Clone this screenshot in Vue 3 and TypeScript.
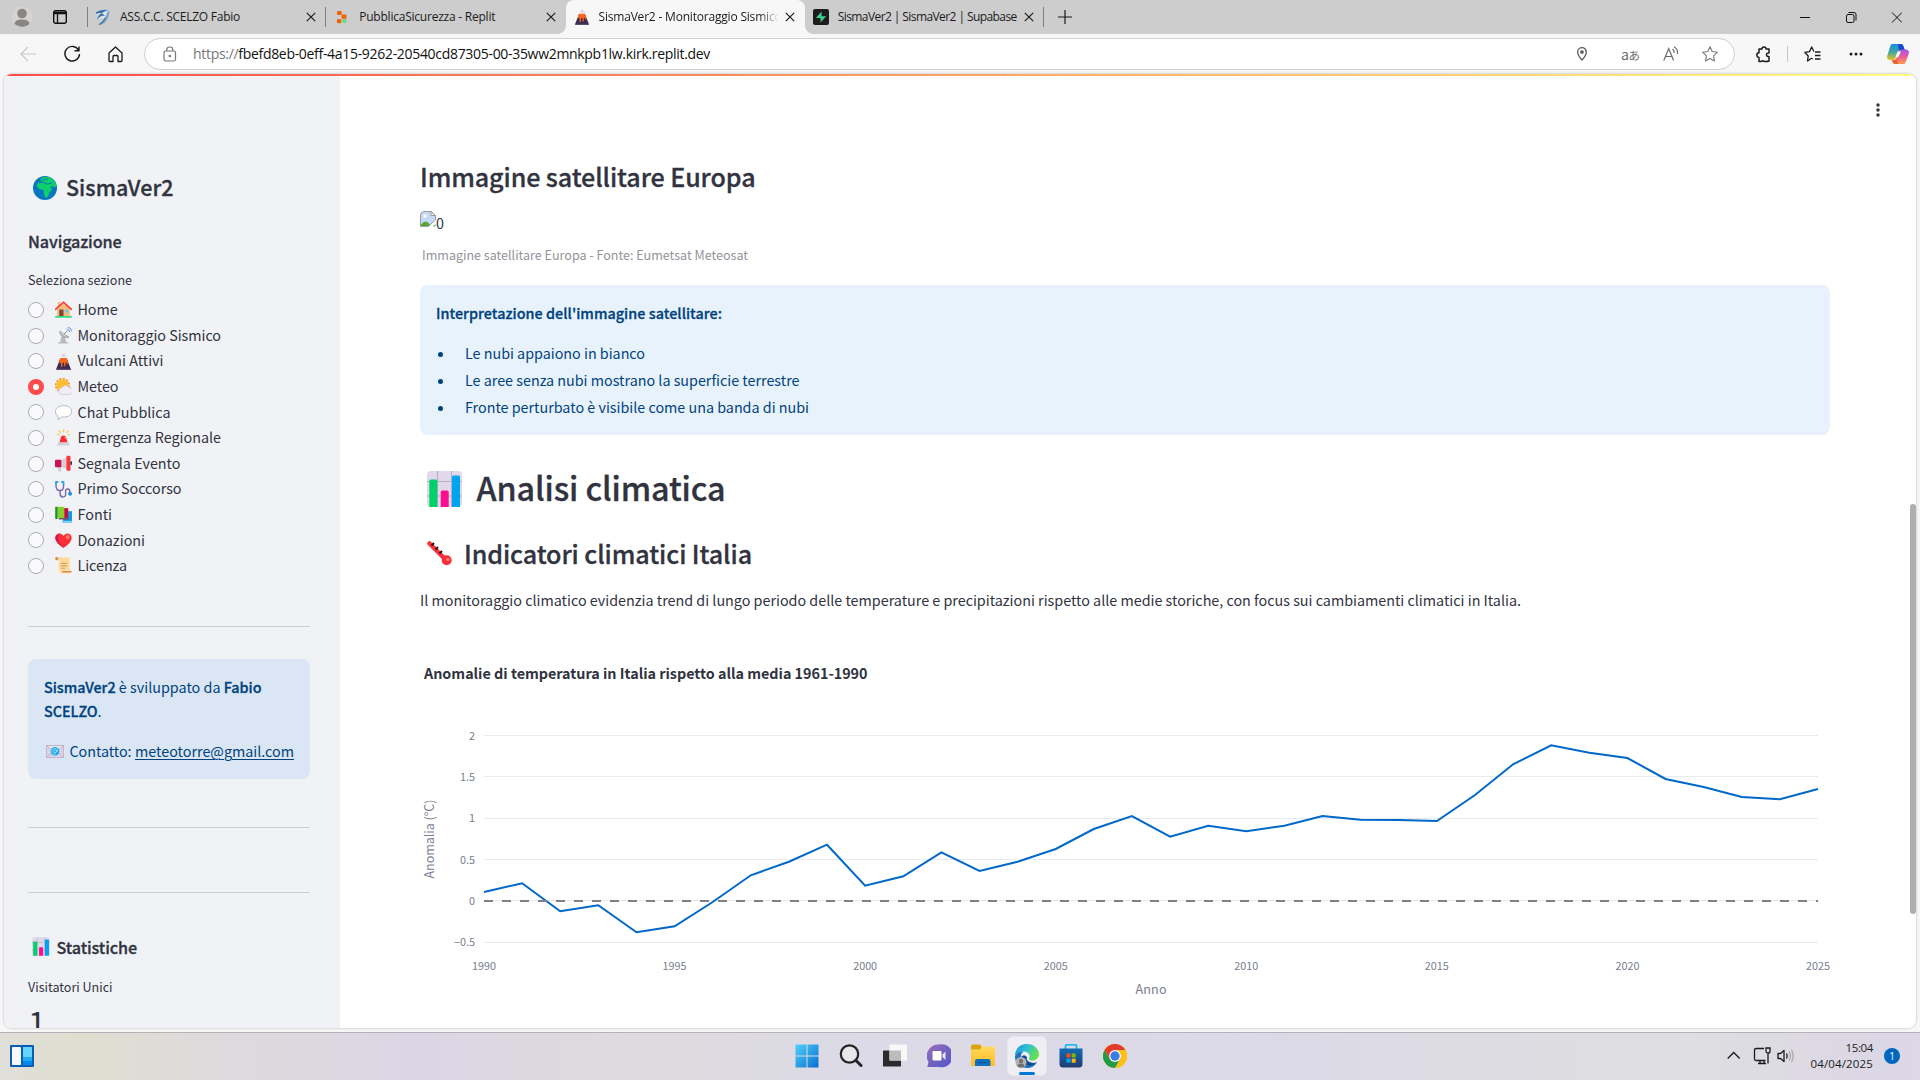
<script setup lang="ts">
interface Tab { title: string; icon: string; width: number; active?: boolean }

const tabs: Tab[] = [
  { title: 'ASS.C.C. SCELZO Fabio', icon: 'f-bird', width: 120 },
  { title: 'PubblicaSicurezza - Replit', icon: 'f-replit', width: 136 },
  { title: 'SismaVer2 - Monitoraggio Sismico', icon: 'e-volcano', width: 183, active: true },
  { title: 'SismaVer2 | SismaVer2 | Supabase', icon: 'f-supabase', width: 179 },
]

const sections = [
  { label: 'Home', icon: 'e-home', width: 40 },
  { label: 'Monitoraggio Sismico', icon: 'e-dish', width: 143.5 },
  { label: 'Vulcani Attivi', icon: 'e-volcano', width: 86 },
  { label: 'Meteo', icon: 'e-sun', width: 41 },
  { label: 'Chat Pubblica', icon: 'e-chat', width: 93 },
  { label: 'Emergenza Regionale', icon: 'e-siren', width: 143.5 },
  { label: 'Segnala Evento', icon: 'e-mega', width: 103 },
  { label: 'Primo Soccorso', icon: 'e-steth', width: 104 },
  { label: 'Fonti', icon: 'e-books', width: 34.5 },
  { label: 'Donazioni', icon: 'e-heart', width: 67.5 },
  { label: 'Licenza', icon: 'e-scroll', width: 49.5 },
]
const selected = 'Meteo'

const notes = [
  { text: 'Le nubi appaiono in bianco', width: 180 },
  { text: 'Le aree senza nubi mostrano la superficie terrestre', width: 334.5 },
  { text: 'Fronte perturbato è visibile come una banda di nubi', width: 344 },
]

const taskApps = ['t-win', 't-search', 't-view', 't-chat', 't-folder', 't-edge', 't-store', 't-chrome']

// Temperature anomalies, one value per year from 1990
const anomalies = [
  0.108, 0.213, -0.126, -0.053, -0.38, -0.307, -0.013, 0.309, 0.474, 0.679, 0.184, 0.297,
  0.587, 0.361, 0.474, 0.627, 0.869, 1.026, 0.776, 0.909, 0.841, 0.909, 1.026, 0.981, 0.978,
  0.966, 1.28, 1.651, 1.88, 1.791, 1.727, 1.473, 1.376, 1.256, 1.228, 1.352,
]
const xOf = (year: number) => 64 + ((year - 1990) * 1334) / 35
const yOf = (v: number) => 260.9 - v * 82.75
const points = anomalies.map((v, i) => `${xOf(1990 + i).toFixed(1)},${yOf(v).toFixed(1)}`).join(' ')
const yTicks = [2, 1.5, 1, 0.5, 0, -0.5]
const xTicks = [1990, 1995, 2000, 2005, 2010, 2015, 2020, 2025]

// Tracks a label so that it fills its design width whichever face is installed
const vFit = {
  mounted(el: HTMLElement, binding: { value: number }) {
    const count = (el.textContent ?? '').trim().length
    const natural = el.getBoundingClientRect().width
    if (count) el.style.letterSpacing = `${((binding.value - natural) / count).toFixed(3)}px`
  },
}
</script>

<template>
  <div class="screen">
    <svg class="sprite" width="0" height="0" aria-hidden="true">
      <defs>
        <linearGradient id="gWin" x1="0" y1="0" x2="1" y2="1"><stop offset="0" stop-color="#4fd0fb" /><stop offset="1" stop-color="#0a6fd0" /></linearGradient>
        <linearGradient id="gEdge" x1="0" y1="0" x2="1" y2="0.4"><stop offset="0" stop-color="#1b8fd8" /><stop offset="0.5" stop-color="#2cc0d8" /><stop offset="1" stop-color="#66e04c" /></linearGradient>
        <linearGradient id="gChat" x1="0" y1="0" x2="1" y2="1"><stop offset="0" stop-color="#9a6fb5" /><stop offset="1" stop-color="#4f55cc" /></linearGradient>
        <linearGradient id="gFold" x1="0" y1="0" x2="0" y2="1"><stop offset="0" stop-color="#ffd95e" /><stop offset="1" stop-color="#fbbd23" /></linearGradient>
        <linearGradient id="gStore" x1="0" y1="0" x2="0" y2="1"><stop offset="0" stop-color="#0f6cb5" /><stop offset="1" stop-color="#233a72" /></linearGradient>
        <linearGradient id="gCopA" x1="0" y1="0" x2="0" y2="1"><stop offset="0" stop-color="#1a8bea" /><stop offset="0.5" stop-color="#3ba7a0" /><stop offset="1" stop-color="#f0c21a" /></linearGradient>
        <linearGradient id="gCopB" x1="0" y1="0" x2="0" y2="1"><stop offset="0" stop-color="#a052ee" /><stop offset="0.5" stop-color="#ee5b9a" /><stop offset="1" stop-color="#ff9a4a" /></linearGradient>
      </defs>

      <symbol id="f-bird" viewBox="0 0 16 16"><path d="M1 3.500Q6 0 14 1l1-.3Q15 6 13 10q-2 4-6 5.500l-4 .2q5-3 5.500-7Q4 8.500 2 12q0-5 6-7Q4 4 1 6z" fill="#dfe8f0" /><path d="M1 3.200Q6 0 14.500 1 9 2 7 4.500q2 .5 3 2.500Q5 6 2 11.500 2.500 6 7 4 4 3.500 1 5z" fill="#3876ac" /><path d="M12 3l2.700-1.500q0 5-2.200 9Q10 14.500 6 15.700l-3 0q5-2 7-6.500 1.500-3 2-6.200z" fill="#8ba3b8" /><path d="M10.500 7q.5 5-5 8.500l-2.500.2Q8.500 12 10.500 7z" fill="#3b78b0" /></symbol>
      <symbol id="f-replit" viewBox="0 0 16 16"><rect x="3" y="2" width="4.700" height="4" rx="1" fill="#f26207" /><rect x="7.500" y="5.500" width="5" height="4.300" rx="1" fill="#f26207" /><rect x="3" y="10" width="4.300" height="4.300" rx="1" fill="#f26207" /><rect x="8" y="10" width="4.500" height="4" rx="1" fill="#77d68a" /></symbol>
      <symbol id="f-supabase" viewBox="0 0 16 16"><rect width="16" height="16" rx="2" fill="#1c1c1c" /><path d="M8.600 2.500v4.700h4.600L7.600 13.500V9H2.900z" fill="#3ecf8e" /></symbol>

      <symbol id="e-globe" viewBox="0 0 24 24"><circle cx="12" cy="12" r="12" fill="#0877bf" /><path d="M7 3.500C9 1 14-.5 18 2c3 2 5 5 5.500 8l-2 1.500-2-1.500-2.500 1 2 2.500-3 3.500-1 3.500-2.500 1.500L11 18l-.5-4-4-1L3.500 10 5 6.500l4-1z" fill="#0bd168" /><path d="M6 7q4-2 8 1l5-1M9 4l6-1" fill="none" stroke="#0877bf" stroke-width="1.100" /></symbol>
      <symbol id="e-home" viewBox="0 0 16 16"><rect x="2.500" y="1" width="2.500" height="5" fill="#f4bd7b" /><path d="M2 7l6-5.500L14 7v8H2z" fill="#f4bd7b" /><path d="M.5 7.800L8 1.200l7.500 6.600" fill="none" stroke="#fb3838" stroke-width="1.500" stroke-linecap="round" /><rect x="4" y="8" width="4" height="6.500" fill="#7b4837" /><rect x="9.500" y="8" width="3" height="3" fill="#6fc5f8" /><rect y="14.200" width="16" height="1.600" rx=".8" fill="#35dc88" /></symbol>
      <symbol id="e-dish" viewBox="0 0 16 16"><path d="M6 9h3l1.500 5H12v1.500H3V14h2z" fill="#b9b9bc" /><path d="M4 4.500Q4 10 12.500 10.500L13 9z" fill="#a9a9ad" /><path d="M4.500 3.800L13 9.500q-3.500.3-6-1.500T4.500 3.800" fill="#d2d2d5" stroke="#97979c" stroke-width=".5" /><path d="M8.500 6.500l3.500-3" stroke="#8a8a8f" stroke-width=".9" /><path d="M11 1.800q2.500.2 2.800 2.900M12 .3q3.600.2 3.500 3.800" fill="none" stroke="#5c93ea" stroke-width=".9" /></symbol>
      <symbol id="e-volcano" viewBox="0 0 16 16"><circle cx="8" cy="2.300" r="1.700" fill="#d8d5db" /><circle cx="10" cy="3" r="1.300" fill="#e6e3e8" /><path d="M5 5h6l4 10.500H1z" fill="#392c50" /><path d="M5 4.800h6l1.600 5-1.600 1v-2l-1.200.3v3.400H8.500V9.500L7 9v4H5.600V9.300L3.700 9z" fill="#fb651f" /><path d="M1 15.800q0-1.500 2-1.500h10q2 0 2 1.500z" fill="#493262" /></symbol>
      <symbol id="e-sun" viewBox="0 0 16 16"><circle cx="7" cy="7" r="6.300" fill="none" stroke="#ff8a1e" stroke-width="1.600" stroke-dasharray="2 1.300" /><circle cx="7" cy="7" r="5.700" fill="#fcc02f" /><path d="M6.500 15.500a3 3 0 01-.3-6A4 4 0 0113 8.700a3.400 3.400 0 01.5 6.800z" fill="#f1edf7" stroke="#cec3dc" stroke-width=".7" /></symbol>
      <symbol id="e-chat" viewBox="0 0 16 16"><path d="M8 1.500c5 0 7.600 2.500 7.600 5.500S13 12.300 8 12.300H6L3 14.800l-.3-3.600C1 10.300.4 8.800.4 7 .4 4 3.500 1.500 8 1.500z" fill="#fff" stroke="#b4b5ba" stroke-width=".9" /></symbol>
      <symbol id="e-siren" viewBox="0 0 16 16"><path d="M8 .5v2.500M3.500 1.500l1.700 2M12.500 1.500l-1.700 2M2 5l2 .6M14 5l-2 .6" stroke="#ffc843" stroke-width="1.200" /><path d="M4.200 13l1.300-5q.4-2 2.500-2t2.500 2l1.300 5z" fill="#fa2d35" /><path d="M8.500 7.500h1.500l.4 2z" fill="#ffb7a8" /><path d="M3.200 12.500h9.600l1.200 3H2z" fill="#d3cfd3" /></symbol>
      <symbol id="e-mega" viewBox="0 0 16 16"><path d="M2 8h4v7.500H3z" fill="#d5d2d6" /><path d="M5.500 5L12 1.500v12L5.500 11z" fill="#d5d2d6" /><rect y="4.500" width="6" height="7" rx=".8" fill="#ce1250" /><rect x="10.800" y=".8" width="3.800" height="14" rx="1.200" fill="#fc3539" /><rect x="14.500" y="5.800" width="1.500" height="3.500" rx=".7" fill="#30293d" /></symbol>
      <symbol id="e-steth" viewBox="0 0 16 16"><path d="M3 1H1v4q0 4 3.600 4T8 5V1H6" fill="none" stroke="#8063b5" stroke-width="1.300" /><path d="M3 1H1v3M6 1h2v3" fill="none" stroke="#18b1e8" stroke-width="1.400" /><path d="M4.800 9v3q0 3 2.700 3t2.500-3V9q.2-1.500 2-1.500t2 2V11" fill="none" stroke="#7565aa" stroke-width="1.300" /><circle cx="14.200" cy="12" r="1.800" fill="#168bf2" /></symbol>
      <symbol id="e-books" viewBox="0 0 16 16"><path d="M9 5h7v10.500H7z" fill="#0a9de3" /><path d="M7 14h9v1.500H7z" fill="#8dcaf0" /><path d="M4 2h8.500v10.500H4z" fill="#ca0b4a" /><path d="M3.500 11h9v1.500h-9z" fill="#6e5267" /><path d="M.3.800h8.500v10.500H.300z" fill="#84cf2c" /><path d="M.3.800h2v11.500h-2z" fill="#218c43" /></symbol>
      <symbol id="e-heart" viewBox="0 0 16 16"><path d="M8 15Q.3 10 .3 5.700C.3 1 5.500-.2 8 3.700c2.500-3.900 7.700-2.700 7.700 2Q15.700 10 8 15z" fill="#f92f35" /><path d="M.3 5.700Q.3 10 8 15 3 10 3 5t2-3.600Q.5 2 .3 5.700" fill="#d61649" /><ellipse cx="12" cy="4.600" rx="1.800" ry="2.200" fill="#ff716a" transform="rotate(25 12 4.600)" /></symbol>
      <symbol id="e-scroll" viewBox="0 0 16 16"><path d="M1 .2h11.500q1.500 0 1.500 1.500V13H3.500V3H1z" fill="#fddb9f" /><circle cx="1.600" cy="1.500" r="1.500" fill="#cf8d4d" /><path d="M5.500 6h6M5.500 8.300h6M5.500 10.600h4" stroke="#dda25e" stroke-width="1.100" /><path d="M6 13h9.800q0 2.500-2 2.500H5q-1.500 0-1.500-1.800z" fill="#ffe2ae" /><path d="M6.500 13.900h9" stroke="#cf8d4d" stroke-width="1.400" /></symbol>
      <symbol id="e-mail" viewBox="0 0 18 13"><rect x=".5" y=".5" width="17" height="12" fill="#ddd3e4" stroke="#c3b7cd" /><path d="M.5 12.500L7 6.500M17.500 12.500L11 6.500" stroke="#b7aac3" stroke-width=".8" fill="none" /><path d="M.5.500h17L9 8z" fill="#ece6f0" stroke="#b7aac3" stroke-width=".8" /><circle cx="9" cy="6.300" r="4.300" fill="#16a5ec" /><circle cx="9" cy="6.300" r="1.400" fill="none" stroke="#9fe2ff" stroke-width=".8" /><path d="M10.500 5v1.800q.9 1 1.200-.8a2.900 2.900 0 10-1.700 2.900" fill="none" stroke="#9fe2ff" stroke-width=".7" /></symbol>
      <symbol id="e-bars" viewBox="0 0 35 36"><rect width="35" height="36" rx="4" fill="#e1d8ec" /><path d="M10.500 0v36M24.500 0v36M0 10.500h35M0 25h35" stroke="#b9adc3" stroke-width="1.100" /><path d="M2.300 36V10q0-1.500 1.500-1.500h5q1.500 0 1.500 1.500v26z" fill="#00d169" /><path d="M13.700 36V21q0-1.500 1.500-1.500h5q1.500 0 1.500 1.500v15z" fill="#fb0e8f" /><path d="M25 36V6q0-1.500 1.500-1.500h5Q33 4.500 33 6v30z" fill="#00a5ef" /></symbol>
      <symbol id="e-thermo" viewBox="0 0 25 25"><path d="M2.500 2.500L19 19" stroke="#fb3038" stroke-width="4.500" stroke-linecap="round" /><circle cx="19.700" cy="19.300" r="5" fill="#fb3038" /><path d="M4.500 4.500l2.500-2.500M8.500 8.500L11 6M12.500 12.500L15 10" stroke="#1d1720" stroke-width="2" /><circle cx="21" cy="18.500" r="1.600" fill="#ff8a80" /></symbol>

      <symbol id="t-win" viewBox="0 0 24 24"><path d="M.5.500h11v11H.500zM12.500.500h11v11h-11zM.5 12.500h11v11H.500zM12.500 12.500h11v11h-11z" fill="url(#gWin)" /></symbol>
      <symbol id="t-search" viewBox="0 0 24 24"><circle cx="10.500" cy="10" r="8.700" fill="#e9e7ee" stroke="#242424" stroke-width="2.200" /><path d="M17 16.500l5 5" stroke="#242424" stroke-width="3" stroke-linecap="round" /></symbol>
      <symbol id="t-view" viewBox="0 0 24 24"><rect y="6.500" width="18" height="16" rx=".7" fill="#2b2b2b" /><rect x="6.500" y=".5" width="17.500" height="16" rx=".7" fill="#f8f8f8" /><path d="M6.500 6.500H18v10H6.500z" fill="#bcbcbd" /></symbol>
      <symbol id="t-chat" viewBox="0 0 24 24"><path d="M12 .5a11.500 11.500 0 110 22.500H1q-.7 0-.5-1l1-4A11.500 11.500 0 0112 .5z" fill="url(#gChat)" /><rect x="5.500" y="7" width="9" height="9.500" rx="1" fill="#fff" /><path d="M15.500 10.500l3-3v8.500l-3-3z" fill="#e9e5ff" /></symbol>
      <symbol id="t-folder" viewBox="0 0 24 24"><path d="M0 2q0-1.500 1.500-1.500H8q1 0 1.700 1L11 3v5H0z" fill="#dda20c" /><path d="M0 5.500h9l2-3h11.500Q24 2.500 24 4v18H0z" fill="url(#gFold)" /><path d="M4 22v-5q0-2 2-2h11.500q2 0 2 2v5z" fill="#1170bd" /><path d="M7.500 18.500h9" stroke="#0b579b" stroke-width="1.500" /></symbol>
      <symbol id="t-edge" viewBox="0 0 24 24"><path d="M0 12C0 5 5 0 12 0s12 5 12 10c0 4-3 6.500-7 6.500q-3.500 0-3-2 1-1.500.5-3.500Q13 7.500 8.500 7.500 3 8 0 12z" fill="url(#gEdge)" /><path d="M0 12q3-4.500 8.500-4.500Q5.500 9 6 13.500 7 21 14 22q4 .5 8-3.500Q18.500 24 12 24 0 23.500 0 12z" fill="#1a73c0" /><path d="M6 13q0 8 8 9 5 .3 8-4-4 2-8.500-.5-2.500-2-1.500-4.500-3-3.500-6 0z" fill="#114b93" /><circle cx="6" cy="18.500" r="5.500" fill="#b4b3b2" /><circle cx="6" cy="17" r="2.200" fill="#73706e" /><path d="M2.500 22q0-2.600 3.500-2.600T9.500 22q-3.500 3-7 0" fill="#73706e" /></symbol>
      <symbol id="t-store" viewBox="0 0 24 24"><path d="M6.500 5.500V2q0-1.200 1.200-1.200h8.600q1.200 0 1.200 1.200v3.500" fill="none" stroke="#23b9f2" stroke-width="1.800" /><path d="M.5 4.500h23V20q0 3.500-3.500 3.500H4Q.5 23.500.500 20z" fill="url(#gStore)" /><path d="M7.500 9.500h4v4h-4z" fill="#f25022" /><path d="M12.700 9.500h4v4h-4z" fill="#7fba00" /><path d="M7.500 14.700h4v4h-4z" fill="#00a4ef" /><path d="M12.700 14.700h4v4h-4z" fill="#ffb900" /></symbol>
      <symbol id="t-chrome" viewBox="0 0 24 24"><circle cx="12" cy="12" r="12" fill="#fbc116" /><path d="M1.600 6A12 12 0 0122.400 6H12l-5.200 9z" fill="#e33b2e" /><path d="M1.600 6A12 12 0 0012 24l5.200-9-10.400 0z" fill="#229a46" /><path d="M12 6h10.400A12 12 0 0112 24l5.200-9z" fill="#fbc116" /><circle cx="12" cy="12" r="5.900" fill="#fff" /><circle cx="12" cy="12" r="4.700" fill="#3a7de8" /></symbol>
    </svg>

    <header class="tabbar">
      <svg class="avatar" width="22" height="22" viewBox="0 0 22 22"><circle cx="11" cy="11" r="10.500" fill="#d6d3d1" /><circle cx="11" cy="7.500" r="4.800" fill="#8a8582" /><path d="M3.500 18q0-4.500 7.500-4.500t7.500 4.500q-7 6-15 0" fill="#8a8582" /></svg>
      <svg class="workspace" width="14" height="14" viewBox="0 0 14 14" fill="none" stroke="#111"><rect x=".7" y=".7" width="12.600" height="12.600" rx="2" stroke-width="1.400" /><path d="M1 3h12" stroke-width="2.500" /><path d="M4.500 3v10" stroke-width="1.300" /></svg>
      <div v-for="tab in tabs" :key="tab.title" class="tab" :class="{ active: tab.active }">
        <svg class="favicon" width="16" height="16"><use :href="'#' + tab.icon" /></svg>
        <div class="tabtitle"><span v-fit="tab.width" class="fit">{{ tab.title }}</span></div>
        <svg class="close" width="10" height="10" viewBox="0 0 10 10"><path d="M.8.800l8.400 8.400M9.200.800L.8 9.200" stroke="#1b1b1b" stroke-width="1.200" /></svg>
      </div>
      <svg class="plus" width="14" height="14" viewBox="0 0 14 14"><path d="M7 0v14M0 7h14" stroke="#1b1b1b" stroke-width="1.200" /></svg>
      <svg class="winctl" width="102" height="12" viewBox="0 0 102 12" fill="none" stroke="#111"><path d="M0 6.500h10" /><rect x="46.500" y="3.500" width="7.500" height="8" rx="1.500" /><path d="M48.500 1.500h5.500q2 0 2 2V9.500" /><path d="M92 1.500l10 10M102 1.500l-10 10" /></svg>
    </header>

    <nav class="toolbar">
      <svg class="navicons" width="104" height="18" viewBox="0 0 104 18" fill="none">
        <path d="M16 9H1M8 2L1 9l7 7" stroke="#c9c9c9" stroke-width="1.200" />
        <path d="M58.600 5.200A7.300 7.300 0 1059.500 9M59 1.500v4.300h-4.500" stroke="#1b1b1b" stroke-width="1.400" />
        <path d="M89 8l6.500-6 6.500 6v7.500q0 1-1 1h-3v-5q0-1-1-1h-3q-1 0-1 1v5h-3q-1 0-1-1z" stroke="#1b1b1b" stroke-width="1.300" stroke-linejoin="round" />
      </svg>
      <div class="address">
        <svg class="lock" width="14" height="16" viewBox="0 0 14 16" fill="none" stroke="#777" stroke-width="1.200"><rect x="1" y="5" width="11.500" height="10" rx="1.800" /><path d="M3.800 5V3.500q0-2.500 3-2.500t3 2.500V5" /><circle cx="6.800" cy="10" r=".7" fill="#777" /></svg>
        <span v-fit="517" class="url fit"><i>https://</i>fbefd8eb-0eff-4a15-9262-20540cd87305-00-35ww2mnkpb1lw.kirk.replit.dev</span>
        <svg class="pin" width="10" height="14" viewBox="0 0 10 14" fill="none" stroke="#5d5d5d" stroke-width="1.300"><path d="M5 13Q.7 8.500.7 5a4.300 4.300 0 018.600 0Q9.300 8.500 5 13z" /><circle cx="5" cy="5" r="1.200" fill="#5d5d5d" /></svg>
        <span class="translate">a<small>あ</small></span>
        <svg class="read" width="16" height="16" viewBox="0 0 16 16" fill="none" stroke="#6a6a6a" stroke-width="1.200"><path d="M.8 14.500L5.700 2.500l4.900 12M2.600 10.500h6.200M9.500 3q2 1.500 1.500 4M11 .8q4.500 2.500 3.200 7.200" /></svg>
        <svg class="star" width="16" height="16" viewBox="0 0 16 16" fill="none" stroke="#777" stroke-width="1.100"><path d="M8 .8l2.200 4.700 5.200.7-3.800 3.600.9 5.200L8 12.500 3.500 15l.9-5.200L.6 6.200l5.200-.7z" stroke-linejoin="round" /></svg>
      </div>
      <svg class="puzzle" width="15" height="17" viewBox="0 0 15 17" fill="none" stroke="#1b1b1b" stroke-width="1.500"><path d="M3 3h3q0-2 2-2t2 2h3v4q-2.500-.3-2.500 1.700T13 10.500V15q-1 .5-3 .5H8q-1-1.300-3 0H3v-4Q.8 11 .8 9T3 6.800z" stroke-linejoin="round" /></svg>
      <i class="vline"></i>
      <svg class="favs" width="17" height="16" viewBox="0 0 17 16" fill="none" stroke="#1b1b1b" stroke-width="1.300"><path d="M11 6H16.500M11 9.500h5.500M11 13h5.500M8.800 13L7.500 12.300 3.500 15l.7-5L.8 6.300l4.700-.7L7.700 1l2.200 4.500" stroke-linejoin="round" /></svg>
      <svg class="dots" width="14" height="4" viewBox="0 0 14 4" fill="#1b1b1b"><circle cx="2" cy="2" r="1.500" /><circle cx="7" cy="2" r="1.500" /><circle cx="12" cy="2" r="1.500" /></svg>
      <svg class="copilot" width="22" height="20" viewBox="0 0 22 20"><path d="M5 0h9q2 0 3 4l.8 2H14q-2 0-2.700 2L9 13q-1 3-3.500 3H3Q-1 15.500.5 11L3 3q.7-3 2-3z" fill="url(#gCopA)" /><path d="M11 0h3q2 0 3 4l.8 2H14q-1.500 0-2 1z" fill="#1b48c8" /><path d="M17 20H8q-2 0-3-4h2q2 0 2.700-2L12 8q1-2.500 3.500-2.500H19q4 .5 2.500 5L19 17q-.7 3-2 3z" fill="url(#gCopB)" /><path d="M8 20q-2 0-3-4h2.500q1.500 0 2.500-2l1 6z" fill="#ee5f38" /><path d="M10.500 7.500h3.500L11.500 13H8.500z" fill="#f7f7f7" /></svg>
    </nav>

    <div class="frame">
      <div class="decoration"></div>
      <aside class="sidebar">
        <h1 class="brand"><svg width="24" height="24"><use href="#e-globe" /></svg><span v-fit="107.500" class="fit">SismaVer2</span></h1>
        <h3 class="navhead"><span v-fit="93.500" class="fit">Navigazione</span></h3>
        <p class="small sel"><span v-fit="104" class="fit">Seleziona sezione</span></p>
        <div class="options">
          <label v-for="s in sections" :key="s.label" class="option">
            <span class="radio" :class="{ on: s.label === selected }"></span>
            <svg width="17" height="17"><use :href="'#' + s.icon" /></svg>
            <span v-fit="s.width" class="fit">{{ s.label }}</span>
          </label>
        </div>
        <hr class="r1" />
        <div class="credit">
          <p><span v-fit="217.500" class="fit"><b>SismaVer2</b> è sviluppato da <b>Fabio</b></span></p>
          <p><span v-fit="57.500" class="fit"><b>SCELZO</b>.</span></p>
          <p class="contact"><svg width="18" height="13"><use href="#e-mail" /></svg><span v-fit="62" class="fit">Contatto:</span><a v-fit="159" class="fit">meteotorre@gmail.com</a></p>
        </div>
        <hr class="r2" />
        <hr class="r3" />
        <h3 class="stat"><svg width="18" height="19"><use href="#e-bars" /></svg><span v-fit="80.500" class="fit">Statistiche</span></h3>
        <p class="small visit"><span v-fit="84.500" class="fit">Visitatori Unici</span></p>
        <div class="metric">1</div>
      </aside>

      <main class="content">
        <svg class="kebab" width="4" height="14" viewBox="0 0 4 14" fill="#31333f"><circle cx="2" cy="2" r="1.700" /><circle cx="2" cy="7" r="1.700" /><circle cx="2" cy="12" r="1.700" /></svg>
        <h2 class="h2"><span v-fit="335.500" class="fit">Immagine satellitare Europa</span></h2>
        <div class="broken">
          <svg width="16" height="16" viewBox="0 0 16 16"><path d="M4 .5h7.500l4 4V9L8 15.500H.500V4q0-3 3.500-3.500z" fill="#c5d8f5" stroke="#9a9a9a" /><path d="M1 15v-1.500q5-6 9 .5l-1 1z" fill="#57a639" /><circle cx="5" cy="5" r="1.800" fill="#fff" /><path d="M11 .5v4h4.500z" fill="#fff" stroke="#9a9a9a" /><path d="M9 16l7-6.500v3L12 16z" fill="#fff" /><path d="M13 15.500h2.500V13z" fill="#57a639" /></svg>
          <span>0</span>
        </div>
        <p class="caption"><span v-fit="326" class="fit">Immagine satellitare Europa - Fonte: Eumetsat Meteosat</span></p>
        <section class="info">
          <p><b v-fit="286" class="fit">Interpretazione dell'immagine satellitare:</b></p>
          <ul>
            <li v-for="n in notes" :key="n.text"><i></i><span v-fit="n.width" class="fit">{{ n.text }}</span></li>
          </ul>
        </section>
        <h1 class="h1"><svg width="35" height="36"><use href="#e-bars" /></svg><span v-fit="249" class="fit">Analisi climatica</span></h1>
        <h2 class="h2 second"><svg width="25" height="25"><use href="#e-thermo" /></svg><span v-fit="288" class="fit">Indicatori climatici Italia</span></h2>
        <p class="intro"><span v-fit="1101" class="fit">Il monitoraggio climatico evidenzia trend di lungo periodo delle temperature e precipitazioni rispetto alle medie storiche, con focus sui cambiamenti climatici in Italia.</span></p>
        <svg class="chart" width="1430" height="388" viewBox="0 0 1430 388">
          <text x="4" y="39" class="ctitle" textLength="443.500">Anomalie di temperatura in Italia rispetto alla media 1961-1990</text>
          <g v-for="v in yTicks" :key="v">
            <line x1="64" x2="1398" :y1="Math.floor(yOf(v)) + 0.5" :y2="Math.floor(yOf(v)) + 0.5" stroke="#e6eaf1" />
            <text x="55" :y="yOf(v) + 4.200" class="tick end">{{ v < 0 ? '−' + -v : v }}</text>
          </g>
          <polyline :points="points" fill="none" stroke="#0068c9" stroke-width="2" />
          <line x1="64" x2="1398" y1="261" y2="261" stroke="#808080" stroke-width="2" stroke-dasharray="9 9" />
          <text v-for="y in xTicks" :key="y" :x="xOf(y)" y="330" class="tick mid">{{ y }}</text>
          <text x="731" y="354" class="axis mid" textLength="31">Anno</text>
          <text transform="translate(14 199) rotate(-90)" class="axis mid" textLength="79">Anomalia (°C)</text>
        </svg>
      </main>
      <div class="thumb"></div>
    </div>

    <footer class="taskbar">
      <svg class="widgets" width="24" height="22" viewBox="0 0 24 22"><rect width="24" height="22" rx="1" fill="#0c5eb0" /><rect x="2" y="2" width="9" height="18" rx=".8" fill="#f5f7f9" /><path d="M13 2h9v10h-9z" fill="#68d6fc" /><path d="M13 12h9v4h-9z" fill="#21a8f6" /><path d="M13 16h9v4h-9z" fill="#0788ed" /></svg>
      <div class="apps">
        <div v-for="a in taskApps" :key="a" class="app" :class="{ current: a === 't-edge' }"><svg width="24" height="24"><use :href="'#' + a" /></svg></div>
      </div>
      <div class="tray">
        <svg width="68" height="18" viewBox="0 0 68 18" fill="none" stroke="#1b1b1b" stroke-width="1.300"><path d="M.7 11.500L6.700 5.500l6 6" /><path d="M37 1.500H29q-1.500 0-1.500 1.500v9q0 1.500 1.500 1.500h9.500M31 16.500h8M33 13.500v3M37 13.500v3M39 1h4v3.500q0 1.500-2 1.500t-2-1.500zM41 6v10.500" /><path d="M51 6.500h2.500L57 3.500v11l-3.500-3H51z" stroke-linejoin="round" /><path d="M59.500 6.500q1.500 2.500 0 5" /><path d="M62 4.500q3 4.500 0 9M64.500 3q3.500 6 0 12" stroke="#aaa5ad" /></svg>
        <div class="clock"><span v-fit="27.500" class="fit">15:04</span><span v-fit="62.500" class="fit">04/04/2025</span></div>
        <span class="badge">1</span>
      </div>
    </footer>
  </div>
</template>

<style>
html, body { margin: 0; overflow: hidden; }
</style>

<style scoped>
.screen { width: 1920px; height: 1080px; background: #f7f7f7; display: flex; flex-direction: column; overflow: hidden; font-family: "Noto Sans CJK JP", "Noto Sans CJK SC", sans-serif; color: #31333f; font-size: 14.350px; }
.screen p, .screen h1, .screen h2, .screen h3, .screen ul { margin: 0; padding: 0; }
.sprite { position: absolute; }
.fit { display: inline-block; white-space: nowrap; }
svg { flex: none; display: block; }

.tabbar { height: 34px; flex: none; background: #cdcdcd; display: flex; align-items: center; font: 12px "Open Sans", "Noto Sans", sans-serif; color: #1b1b1b; }
.avatar { margin-left: 11px; }
.workspace { margin: 0 20px 0 20px; }
.tab { width: 239.250px; height: 34px; box-sizing: border-box; padding: 0 10px 0 8px; display: flex; align-items: center; position: relative; }
.tab:nth-of-type(1)::before, .tab:nth-of-type(1)::after, .tab:nth-of-type(4)::after { content: ""; position: absolute; top: 7px; width: 1px; height: 20px; background: #808080; }
.tab:nth-of-type(1)::before { left: 0; }
.tab:nth-of-type(1)::after, .tab:nth-of-type(4)::after { right: 0; }
.tab.active { background: #f7f7f7; border-radius: 8px 8px 0 0; }
.tab.active::before, .tab.active::after { content: ""; position: absolute; bottom: 0; width: 8px; height: 8px; }
.tab.active::before { left: -8px; background: radial-gradient(circle at 0 0, transparent 7.500px, #f7f7f7 8px); }
.tab.active::after { right: -8px; background: radial-gradient(circle at 100% 0, transparent 7.500px, #f7f7f7 8px); }
.tabtitle { width: 182px; margin-left: 9px; overflow: hidden; line-height: 20px; }
.tab.active .tabtitle { width: 180px; -webkit-mask-image: linear-gradient(90deg, #000 160px, transparent 180px); mask-image: linear-gradient(90deg, #000 160px, transparent 180px); }
.close { margin-left: auto; }
.plus { margin-left: 14px; }
.winctl { margin-left: auto; margin-right: 18px; }

.toolbar { height: 40px; flex: none; display: flex; align-items: center; }
.navicons { margin-left: 20px; }
.address { width: 1591px; height: 32px; margin-left: 20px; box-sizing: border-box; border: 1px solid #cfcfcf; border-radius: 16px; background: #fff; display: flex; align-items: center; }
.lock { margin-left: 18px; margin-right: 16px; }
.url { font: 14px/20px "Open Sans", "Noto Sans", sans-serif; color: #111; }
.url i { font-style: normal; color: #777; }
.pin { margin-left: auto; }
.translate { margin-left: 34px; width: 18px; font-size: 14px; line-height: 16px; color: #6a6a6a; white-space: nowrap; letter-spacing: -.500px; }
.translate small { font-size: 11.500px; }
.read { margin-left: 24px; }
.star { margin-left: 23px; margin-right: 16px; }
.puzzle { margin-left: 21px; }
.vline { width: 1px; height: 16px; background: #c6c6c6; margin-left: 16px; }
.favs { margin-left: 16px; }
.dots { margin-left: 28px; }
.copilot { margin-left: 24px; }

.frame { width: 1912px; height: 954px; flex: none; margin-left: 4px; border-radius: 8px; overflow: hidden; position: relative; background: #fff; display: flex; box-shadow: 0 0 2px 1px rgba(0, 0, 0, .13); }
.decoration { position: absolute; top: 0; left: 0; right: 0; height: 2px; background: linear-gradient(90deg, #ff4b4b, #fffd80); }
.sidebar { width: 336px; height: 954px; box-sizing: border-box; padding: 98px 30px 0 24px; background: #f0f2f6; flex: none; }
.brand { height: 30px; line-height: 30px; font-size: 21.500px; font-weight: 500; display: flex; align-items: center; }
.brand svg { margin: 1px 9.500px 0 4.500px; }
.navhead { margin-top: 27px !important; height: 24px; line-height: 24px; font-size: 16.200px; font-weight: 500; }
.small { height: 20px; line-height: 20px; font-size: 12.550px; }
.sel { margin-top: 17px !important; }
.options { margin-top: 7.200px; display: flex; flex-direction: column; }
.option { height: 25.600px; display: flex; align-items: center; line-height: 24px; }
.option .fit { position: relative; top: -.700px; }
.radio { width: 16px; height: 16px; box-sizing: border-box; border: 1px solid #a9abb3; border-radius: 50%; background: #fafafc; }
.radio.on { border: 5px solid #ff4b4b; background: #fff; }
.option svg { margin: 0 6px 0 10.500px; }
hr { height: 1px; border: 0; background: #cbcdd2; margin: 0; }
.r1 { margin-top: 47.200px; }
.credit { margin-top: 32px; height: 120px; box-sizing: border-box; padding: 16px; border-radius: 8px; background: #dae6f4; color: #004280; line-height: 24px; }
.credit p { height: 24px; }
.credit b, .info b { font-weight: 500; -webkit-text-stroke: .300px currentColor; }
.screen .credit .contact { margin-top: 16px; display: flex; align-items: center; white-space: nowrap; }
.contact svg { margin: 1px 5.500px 0 2px; }
.contact a { margin-left: 3.500px; text-decoration: underline; text-underline-offset: 2px; text-decoration-thickness: 1px; }
.r2 { margin-top: 48px; }
.r3 { margin-top: 64px; }
.stat { margin-top: 42px !important; height: 24px; line-height: 24px; font-size: 16.200px; font-weight: 500; display: flex; align-items: center; }
.stat svg { margin: 0 7px 0 3.500px; }
.visit { margin-top: 18px !important; }
.metric { margin-top: 2px; height: 44px; line-height: 44px; font-size: 32.300px; }

.content { flex: 1; box-sizing: border-box; padding: 85px 0 0 80px; position: relative; }
.kebab { position: absolute; left: 1536px; top: 29px; }
.h2 { height: 34px; line-height: 34px; font-size: 25.100px; font-weight: 500; display: flex; }
.h1 { margin-top: 30px !important; height: 44px; line-height: 44px; font-size: 32.300px; font-weight: 500; display: flex; }
.brand, .navhead, .stat, .h1, .h2 { -webkit-text-stroke: .300px currentColor; }
.h1 svg { margin: 6px 14.500px 0 7px; }
.second { margin-top: 27px !important; }
.second svg { margin: 5px 12px 0 7px; }
.broken { margin-top: 18px; height: 20px; display: flex; }
.broken span { line-height: 20px; margin-top: 1.500px; }
.caption { margin: 14px 0 0 2px !important; height: 20px; line-height: 20px; font-size: 12.550px; color: #93949b; }
.info { width: 1410px; height: 150px; box-sizing: border-box; margin-top: 20px; padding: 16px; border-radius: 8px; background: #e8f2fc; color: #004280; line-height: 24px; }
.info p { height: 24px; }
.info ul { margin-top: 16px !important; display: flex; flex-direction: column; gap: 3px; list-style: none; }
.info li { height: 24px; display: flex; align-items: center; }
.info li i { width: 5px; height: 5px; border-radius: 50%; background: #004280; margin: 3px 22px 0 2px; }
.intro { margin-top: 18px !important; height: 24px; line-height: 24px; }
.chart { margin-top: 28px; }
.ctitle { font-size: 14.350px; font-weight: 700; fill: #31333f; }
.tick { font-size: 10.800px; fill: #787c8f; }
.axis { font-size: 12.550px; fill: #787c8f; }
.end { text-anchor: end; }
.mid { text-anchor: middle; }
.thumb { position: absolute; right: 0; top: 430px; width: 6px; height: 410px; border-radius: 3px; background: #adadb2; }

.taskbar { margin-top: auto; height: 48px; flex: none; box-sizing: border-box; padding-bottom: 1px; border-top: 1px solid #b3b1b5; display: flex; align-items: center; background: linear-gradient(90deg, #e0ded9 0, #dedfd0 85px, #dfdbd9 160px, #ddd8df 290px, #dbd6e5 420px, #dedadd 620px, #dcdae6 850px, #dcd9e8 1250px, #dddce2 1500px, #dfdee1 1690px, #dbd7e5 1870px, #dcd8e8 1920px); position: relative; font-family: "Open Sans", "Noto Sans", sans-serif; }
.widgets { margin-left: 10px; }
.apps { display: flex; gap: 6px; margin-left: 753.500px; }
.app { width: 38px; height: 38px; border-radius: 5px; display: flex; align-items: center; justify-content: center; position: relative; }
.app.current { background: #efeef5; box-shadow: 0 0 0 1px rgba(255, 255, 255, .3); }
.app.current::after { content: ""; position: absolute; bottom: 0; left: 11px; width: 16px; height: 3px; border-radius: 2px; background: #0078d4; }
.tray { margin-left: auto; margin-right: 20px; display: flex; align-items: center; color: #1b1b1b; }
.clock { width: 70px; margin-left: 8px; margin-right: 11px; margin-top: -1px; display: flex; flex-direction: column; align-items: flex-end; font-size: 11.500px; line-height: 16px; }
.badge { width: 16px; height: 16px; border-radius: 50%; background: #0067c0; color: #fff; font-size: 10px; line-height: 16px; text-align: center; }
</style>
